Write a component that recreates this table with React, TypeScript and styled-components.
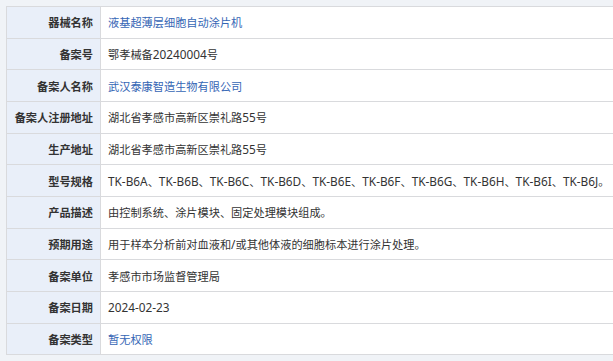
import React from 'react';
import styled, { createGlobalStyle } from 'styled-components';

interface Row {
    label: string;
    value: string;
    link?: boolean;
}

const rows: Row[] = [
    { label: '器械名称', value: '液基超薄层细胞自动涂片机', link: true },
    { label: '备案号', value: '鄂孝械备20240004号' },
    { label: '备案人名称', value: '武汉泰康智造生物有限公司', link: true },
    { label: '备案人注册地址', value: '湖北省孝感市高新区崇礼路55号' },
    { label: '生产地址', value: '湖北省孝感市高新区崇礼路55号' },
    {
        label: '型号规格',
        value: 'TK-B6A、TK-B6B、TK-B6C、TK-B6D、TK-B6E、TK-B6F、TK-B6G、TK-B6H、TK-B6I、TK-B6J。',
    },
    { label: '产品描述', value: '由控制系统、涂片模块、固定处理模块组成。' },
    { label: '预期用途', value: '用于样本分析前对血液和/或其他体液的细胞标本进行涂片处理。' },
    { label: '备案单位', value: '孝感市市场监督管理局' },
    { label: '备案日期', value: '2024-02-23' },
    { label: '备案类型', value: '暂无权限', link: true },
];

const GlobalStyle = createGlobalStyle`
    html, body {
        margin: 0;
        padding: 0;
        background: #f0f3f7;
        overflow: hidden;
    }
    body {
        font-family: "Noto Sans", "Noto Sans CJK SC", sans-serif;
    }
`;

const Page = styled.div`
    padding: 6px 0 0 6px;
    width: 640px;
`;

const Grid = styled.div`
    display: grid;
    grid-template-columns: 94px 1fr;
    grid-auto-rows: 31.66px;
    border: 1px solid #d9dadd;
    border-bottom: none;
    background: #fff;
    font-size: 11.2px;
`;

const Label = styled.div`
    display: flex;
    align-items: center;
    justify-content: flex-end;
    padding-right: 7px;
    background: #e9eff9;
    border-right: 1px solid #d9dadd;
    border-bottom: 1px solid #d9dadd;
    font-weight: 700;
    color: #333;
    white-space: nowrap;
`;

const Value = styled.div<{ $link?: boolean }>`
    display: flex;
    align-items: center;
    padding-left: 7px;
    border-bottom: 1px solid #d9dadd;
    color: ${({ $link }) => ($link ? '#3566b5' : '#333')};
    white-space: pre;
`;

// latin runs render a touch wider in the original UI font
const Latin = styled.span`
    font-size: 11.8px;
`;

const splitRuns = (text: string) =>
    text.split(/([A-Za-z0-9\-/]+)/).map((part, i) =>
        i % 2 === 1 ? <Latin key={i}>{part}</Latin> : part
    );

export default function App() {
    return (
        <>
            <GlobalStyle />
            <Page>
                <Grid>
                    {rows.map((r) => (
                        <React.Fragment key={r.label}>
                            <Label>{r.label}</Label>
                            <Value $link={r.link}>
                                <span>{splitRuns(r.value)}</span>
                            </Value>
                        </React.Fragment>
                    ))}
                </Grid>
            </Page>
        </>
    );
}
